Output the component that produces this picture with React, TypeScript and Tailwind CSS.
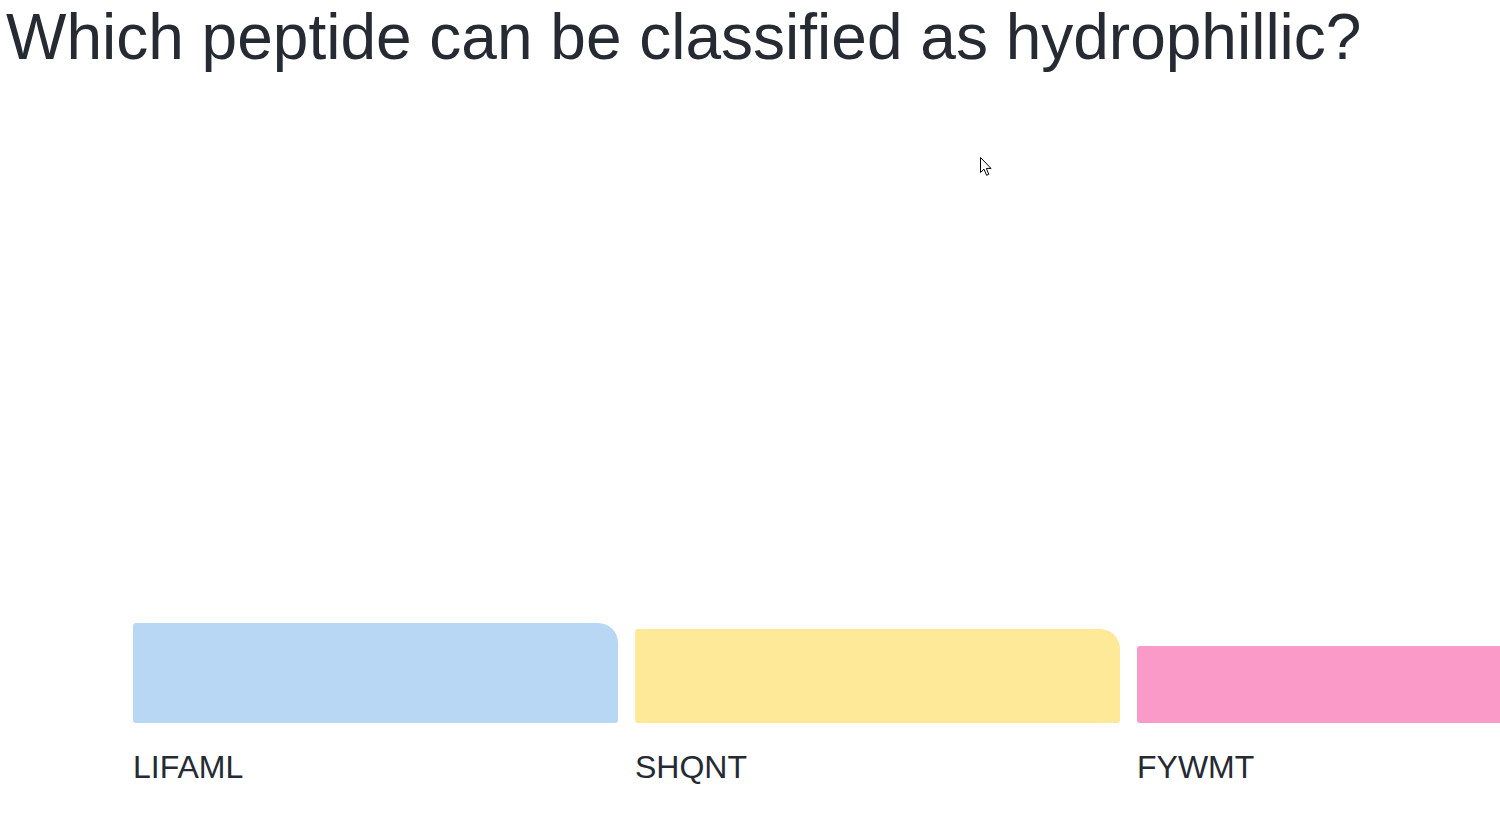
const bars = [
  { label: "LIFAML", height: 100, color: "bg-[#b7d7f4]" },
  { label: "SHQNT", height: 94, color: "bg-[#fee998]" },
  { label: "FYWMT", height: 77, color: "bg-[#fa9ac9]" },
];

function Cursor() {
  return (
    <svg className="absolute left-[980px] top-[157px]" width="13" height="20" viewBox="0 0 13 20">
      <path
        d="M0.5 0.5 L0.5 15.5 L4 12.2 L6.6 18.3 L8.8 17.3 L6.3 11.4 L11 11.4 Z"
        fill="#fff"
        stroke="#000"
        strokeWidth="1"
        strokeLinejoin="miter"
      />
    </svg>
  );
}

export default function App() {
  return (
    <div className="relative h-[827px] w-[1500px] overflow-hidden bg-white font-['Liberation_Sans',Arial,sans-serif] text-[#252a33]">
      <h1 className="h-[75px] pl-[6px] text-[64px] font-normal leading-[1.16] whitespace-nowrap">
        Which peptide can be classified as hydrophillic?
      </h1>

      <div className="flex h-[648px] items-end gap-[17px] pl-[133px]">
        {bars.map((b) => (
          <div
            key={b.label}
            className={`w-[485px] shrink-0 rounded-[3px] rounded-tr-[20px] ${b.color}`}
            style={{ height: b.height }}
          />
        ))}
      </div>

      <div className="mt-[20px] flex gap-[17px] pl-[133px]">
        {bars.map((b) => (
          <div key={b.label} className="w-[485px] shrink-0 text-[32px] leading-normal">
            {b.label}
          </div>
        ))}
      </div>

      <Cursor />
    </div>
  );
}
